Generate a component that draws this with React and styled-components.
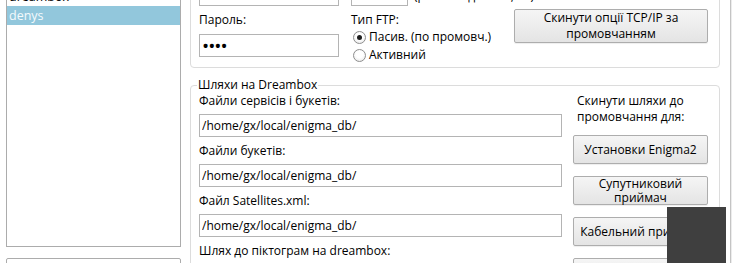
import React from 'react';
import styled, { createGlobalStyle } from 'styled-components';

const GlobalStyle = createGlobalStyle`
  html, body {
    margin: 0;
    padding: 0;
    background: #fff;
  }
  body {
    font-family: "Open Sans", "Noto Sans", sans-serif;
    font-size: 12px;
    line-height: 16px;
    color: #000;
  }
`;

const Page = styled.div`
  position: relative;
  display: flex;
  width: 737px;
  height: 263px;
  overflow: hidden;
  padding-left: 6px;
  box-sizing: border-box;
`;

const LeftColumn = styled.div`
  flex: none;
  width: 175px;
  display: flex;
  flex-direction: column;
  gap: 11px;
`;

const ListBox = styled.div`
  flex: none;
  margin-top: -14px;
  height: 261px;
  border: 1px solid #acacac;
  box-sizing: border-box;
  background: #fff;
`;

const ListItem = styled.div`
  height: 19px;
  line-height: 19px;
  padding-left: 2px;
  font-size: 12.5px;
  background: ${p => (p.$selected ? '#92c7dc' : 'transparent')};
  color: ${p => (p.$selected ? '#f4fafc' : '#000')};
`;

const SecondBox = styled.div`
  flex: none;
  height: 40px;
  border: 1px solid #acacac;
  border-radius: 2px;
  box-sizing: border-box;
`;

const MainColumn = styled.div`
  flex: none;
  width: 530px;
  margin-left: 9px;
  display: flex;
  flex-direction: column;
`;

const Divider = styled.div`
  flex: none;
  width: 1px;
  margin-left: 10px;
  background: #c4c4c4;
  border-right: 1px solid #ececec;
`;

const Group = styled.div`
  flex: none;
  margin-top: -40px;
  padding: 22px 10px 3px 8px;
  border: 1px solid #dcdcdc;
  border-radius: 4px;
  display: flex;
  align-items: flex-start;
`;

const Column = styled.div`
  flex: none;
  width: ${p => p.$width}px;
  margin-right: ${p => p.$gap || 0}px;
  margin-top: ${p => p.$top || 0}px;
  display: flex;
  flex-direction: column;
`;

const InlineRow = styled.div`
  display: flex;
  align-items: flex-start;
  height: 23px;
`;

const Label = styled.div`
  height: 16px;
  white-space: nowrap;
  margin-top: ${p => p.$top || 0}px;
`;

const Hint = styled.span`
  margin: 5px 0 0 6px;
  white-space: nowrap;
`;

const TextBox = styled.input`
  display: block;
  width: ${p => p.$width}px;
  height: 23px;
  margin: ${p => p.$top || 0}px 0 0 0;
  padding: 0 2px;
  border: 1px solid #b4b4b4;
  box-sizing: border-box;
  background: #fff;
  font-family: inherit;
  font-size: ${p => (p.type === 'password' ? '19px' : '12px')};
  letter-spacing: ${p => (p.type === 'password' ? '-1px' : '0')};
  color: #000;
  outline: none;
`;

const RadioRow = styled.label`
  display: flex;
  align-items: center;
  height: 18px;
  padding-left: 2px;
  gap: 3px;
  white-space: nowrap;
`;

const RadioMark = styled.span`
  position: relative;
  flex: none;
  width: 13px;
  height: 13px;
  border: 1px solid #8e8e8e;
  border-radius: 50%;
  box-sizing: border-box;
  background: radial-gradient(circle at 50% 40%, #fff 40%, #e2e2e2 100%);

  &::after {
    content: '';
    display: ${p => (p.$checked ? 'block' : 'none')};
    position: absolute;
    left: 3px;
    top: 3px;
    width: 5px;
    height: 5px;
    border-radius: 50%;
    background: #1e1e1e;
  }
`;

const Button = styled.button`
  display: flex;
  flex-direction: column;
  align-items: center;
  justify-content: center;
  width: ${p => p.$width || 135}px;
  height: ${p => p.$height || 29}px;
  margin: 0;
  padding: 0;
  border: 1px solid #adadad;
  border-radius: 2px;
  box-sizing: border-box;
  background: linear-gradient(#f5f5f5, #e4e4e4);
  box-shadow: 0 1px 1px rgba(0, 0, 0, 0.07);
  font-family: inherit;
  font-size: 12px;
  line-height: ${p => p.$lineHeight || 16}px;
  color: #000;
  text-align: center;
  white-space: nowrap;
  flex: none;
`;

const PathsSet = styled.fieldset`
  flex: none;
  margin: 9px 0 0 0;
  padding: 0 10px 20px 8px;
  border: 1px solid #dcdcdc;
  border-radius: 4px;
  min-inline-size: 0;
  display: flex;
  gap: 11px;
`;

const Legend = styled.legend`
  margin-left: -2px;
  padding: 0 1px;
  line-height: 16px;
`;

const PathsColumn = styled.div`
  flex: none;
  width: 363px;
  display: flex;
  flex-direction: column;
  gap: 6px;
`;

const Field = styled.div`
  display: flex;
  flex-direction: column;
  gap: 5px;
`;

const ResetColumn = styled.div`
  flex: none;
  width: 135px;
  display: flex;
  flex-direction: column;
  gap: 12px;
`;

const ResetText = styled.div`
  padding-left: 4px;
  margin-bottom: -2px;
`;

const Overlay = styled.div`
  position: absolute;
  left: 667px;
  top: 207px;
  width: 59px;
  height: 60px;
  background: #3f3f3f;
`;

const paths = [
  'Файли сервісів і букетів:',
  'Файли букетів:',
  'Файл Satellites.xml:',
];

export default function App() {
  return (
    <>
      <GlobalStyle />
      <Page>
        <LeftColumn>
          <ListBox>
            <ListItem>dreambox</ListItem>
            <ListItem $selected>denys</ListItem>
          </ListBox>
          <SecondBox />
        </LeftColumn>

        <MainColumn>
          <Group>
            <Column $width={140} $gap={12}>
              <TextBox $width={140} readOnly defaultValue="" />
              <Label $top={6}>Пароль:</Label>
              <TextBox $width={140} $top={6} type="password" readOnly defaultValue="1234" />
            </Column>
            <Column $width={151} $gap={12}>
              <InlineRow>
                <TextBox $width={57} readOnly defaultValue="" />
                <Hint>(рекомендовано, 21)</Hint>
              </InlineRow>
              <Label $top={6}>Тип FTP:</Label>
              <RadioRow>
                <RadioMark $checked />
                Пасив. (по промовч.)
              </RadioRow>
              <RadioRow>
                <RadioMark />
                Активний
              </RadioRow>
            </Column>
            <Column $width={194} $top={26}>
              <Button $width={194} $height={34}>
                <span>Скинути опції TCP/IP за</span>
                <span>промовчанням</span>
              </Button>
            </Column>
          </Group>

          <PathsSet>
            <Legend>Шляхи на Dreambox</Legend>
            <PathsColumn>
              {paths.map(label => (
                <Field key={label}>
                  <Label>{label}</Label>
                  <TextBox $width={363} readOnly defaultValue="/home/gx/local/enigma_db/" />
                </Field>
              ))}
              <Label>Шлях до піктограм на dreambox:</Label>
            </PathsColumn>
            <ResetColumn>
              <ResetText>
                Скинути шляхи до
                <br />
                промовчання для:
              </ResetText>
              <Button>Установки Enigma2</Button>
              <Button $lineHeight={14}>
                <span>Супутниковий</span>
                <span>приймач</span>
              </Button>
              <Button>Кабельний приймач</Button>
              <Button>Наземний приймач</Button>
            </ResetColumn>
          </PathsSet>
        </MainColumn>

        <Divider />
        <Overlay />
      </Page>
    </>
  );
}
